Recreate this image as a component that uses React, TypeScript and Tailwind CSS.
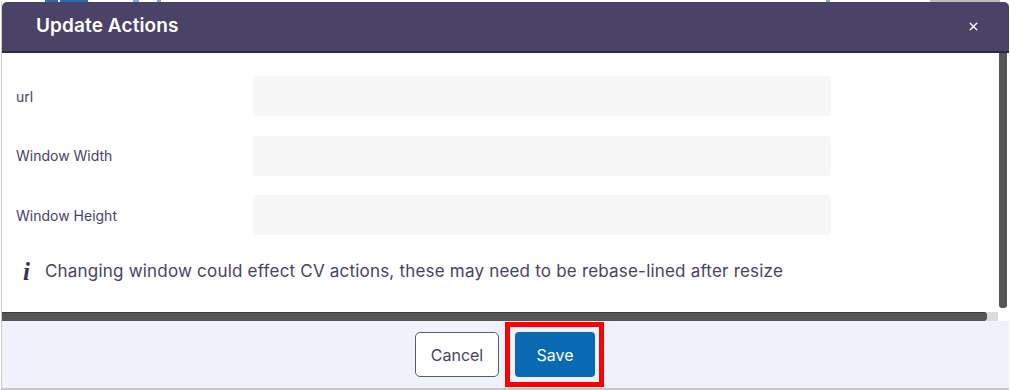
import React from "react";
import { X } from "lucide-react";

export default function App() {
  const font = { fontFamily: "Inter, 'Noto Sans', sans-serif" };
  const fields = ["url", "Window Width", "Window Height"];
  return (
    <div className="w-[1010px] h-[390px] overflow-hidden bg-white flex flex-col" style={font}>
      {/* page strip behind dialog */}
      <div className="h-[2px] flex bg-white">
        <div className="ml-[45px] w-[13px] bg-[#2a6db5]" />
        <div className="ml-[2px] w-[28px] bg-[#2a6db5]" />
        <div className="ml-[45px] w-[6px] bg-[#7aa7d8]" />
        <div className="ml-[18px] w-[4px] bg-[#7aa7d8]" />
        <div className="ml-[665px] w-[4px] bg-[#7aa7d8]" />
        <div className="ml-[100px] w-[70px] bg-[#bdbdbd]" />
      </div>
      <div className="flex-1 flex flex-col ml-px mr-px border-l border-[#cfcfcf]">
        {/* header */}
        <div className="h-[51px] bg-[#4b4267] rounded-t-[5px] border-b-2 border-[#2f2550] flex items-center justify-between pl-[34px] pr-[29px]">
          <span className="text-white text-[19px] font-semibold tracking-[0.1px]">Update Actions</span>
          <X size={13} strokeWidth={2.6} color="#ffffff" />
        </div>
        {/* body */}
        <div className="flex flex-col">
          <div className="flex h-[259px]">
            <div className="flex-1 pt-[23px] pl-[14px]">
              <div className="flex flex-col gap-[19.5px]">
                {fields.map((f) => (
                  <div key={f} className="flex items-center h-[40px]">
                    <div className="w-[237px] text-[14px] text-[#4a4266]">{f}</div>
                    <div className="w-[578px] h-[40px] bg-[#f7f7f7] rounded-[4px]" />
                  </div>
                ))}
              </div>
              <div className="flex items-center mt-[24px] pl-[7px]">
                <span
                  className="text-[#3a3160] text-[25px] italic font-bold leading-none w-[22px]"
                  style={{ fontFamily: "'Liberation Serif', serif" }}
                >
                  i
                </span>
                <span className="text-[17px] text-[#4a4266] tracking-[0.2px]">
                  Changing window could effect CV actions, these may need to be rebase-lined after resize
                </span>
              </div>
            </div>
            <div className="w-[11px] pl-[1px] pb-[4px] bg-white">
              <div className="w-[8px] h-full bg-[#555555] rounded-b-[3px]" />
            </div>
          </div>
          <div className="flex h-[9px]">
            <div className="flex-1 bg-[#555555] rounded-r-[3px] border-t border-[#3c3c3c]" />
            <div className="w-[11px] bg-[#dcdcdc]" />
            <div className="w-[11px] bg-white" />
          </div>
        </div>
        {/* footer */}
        <div className="flex-1 bg-[#eff2fb] border-b-2 border-[#c8c8c8] flex items-center justify-center gap-[6px] pl-[8px]">
          <button className="w-[84px] h-[45px] bg-white border border-[#5a5a6a] rounded-[5px] text-[16px] text-[#4a4266]">
            Cancel
          </button>
          <div className="border-[5px] border-[#ff0000] p-[5px] pr-[4px]">
            <button className="w-[80px] h-[45px] bg-[#0a69b3] rounded-[4px] text-[16px] text-white">
              Save
            </button>
          </div>
        </div>
      </div>
    </div>
  );
}
